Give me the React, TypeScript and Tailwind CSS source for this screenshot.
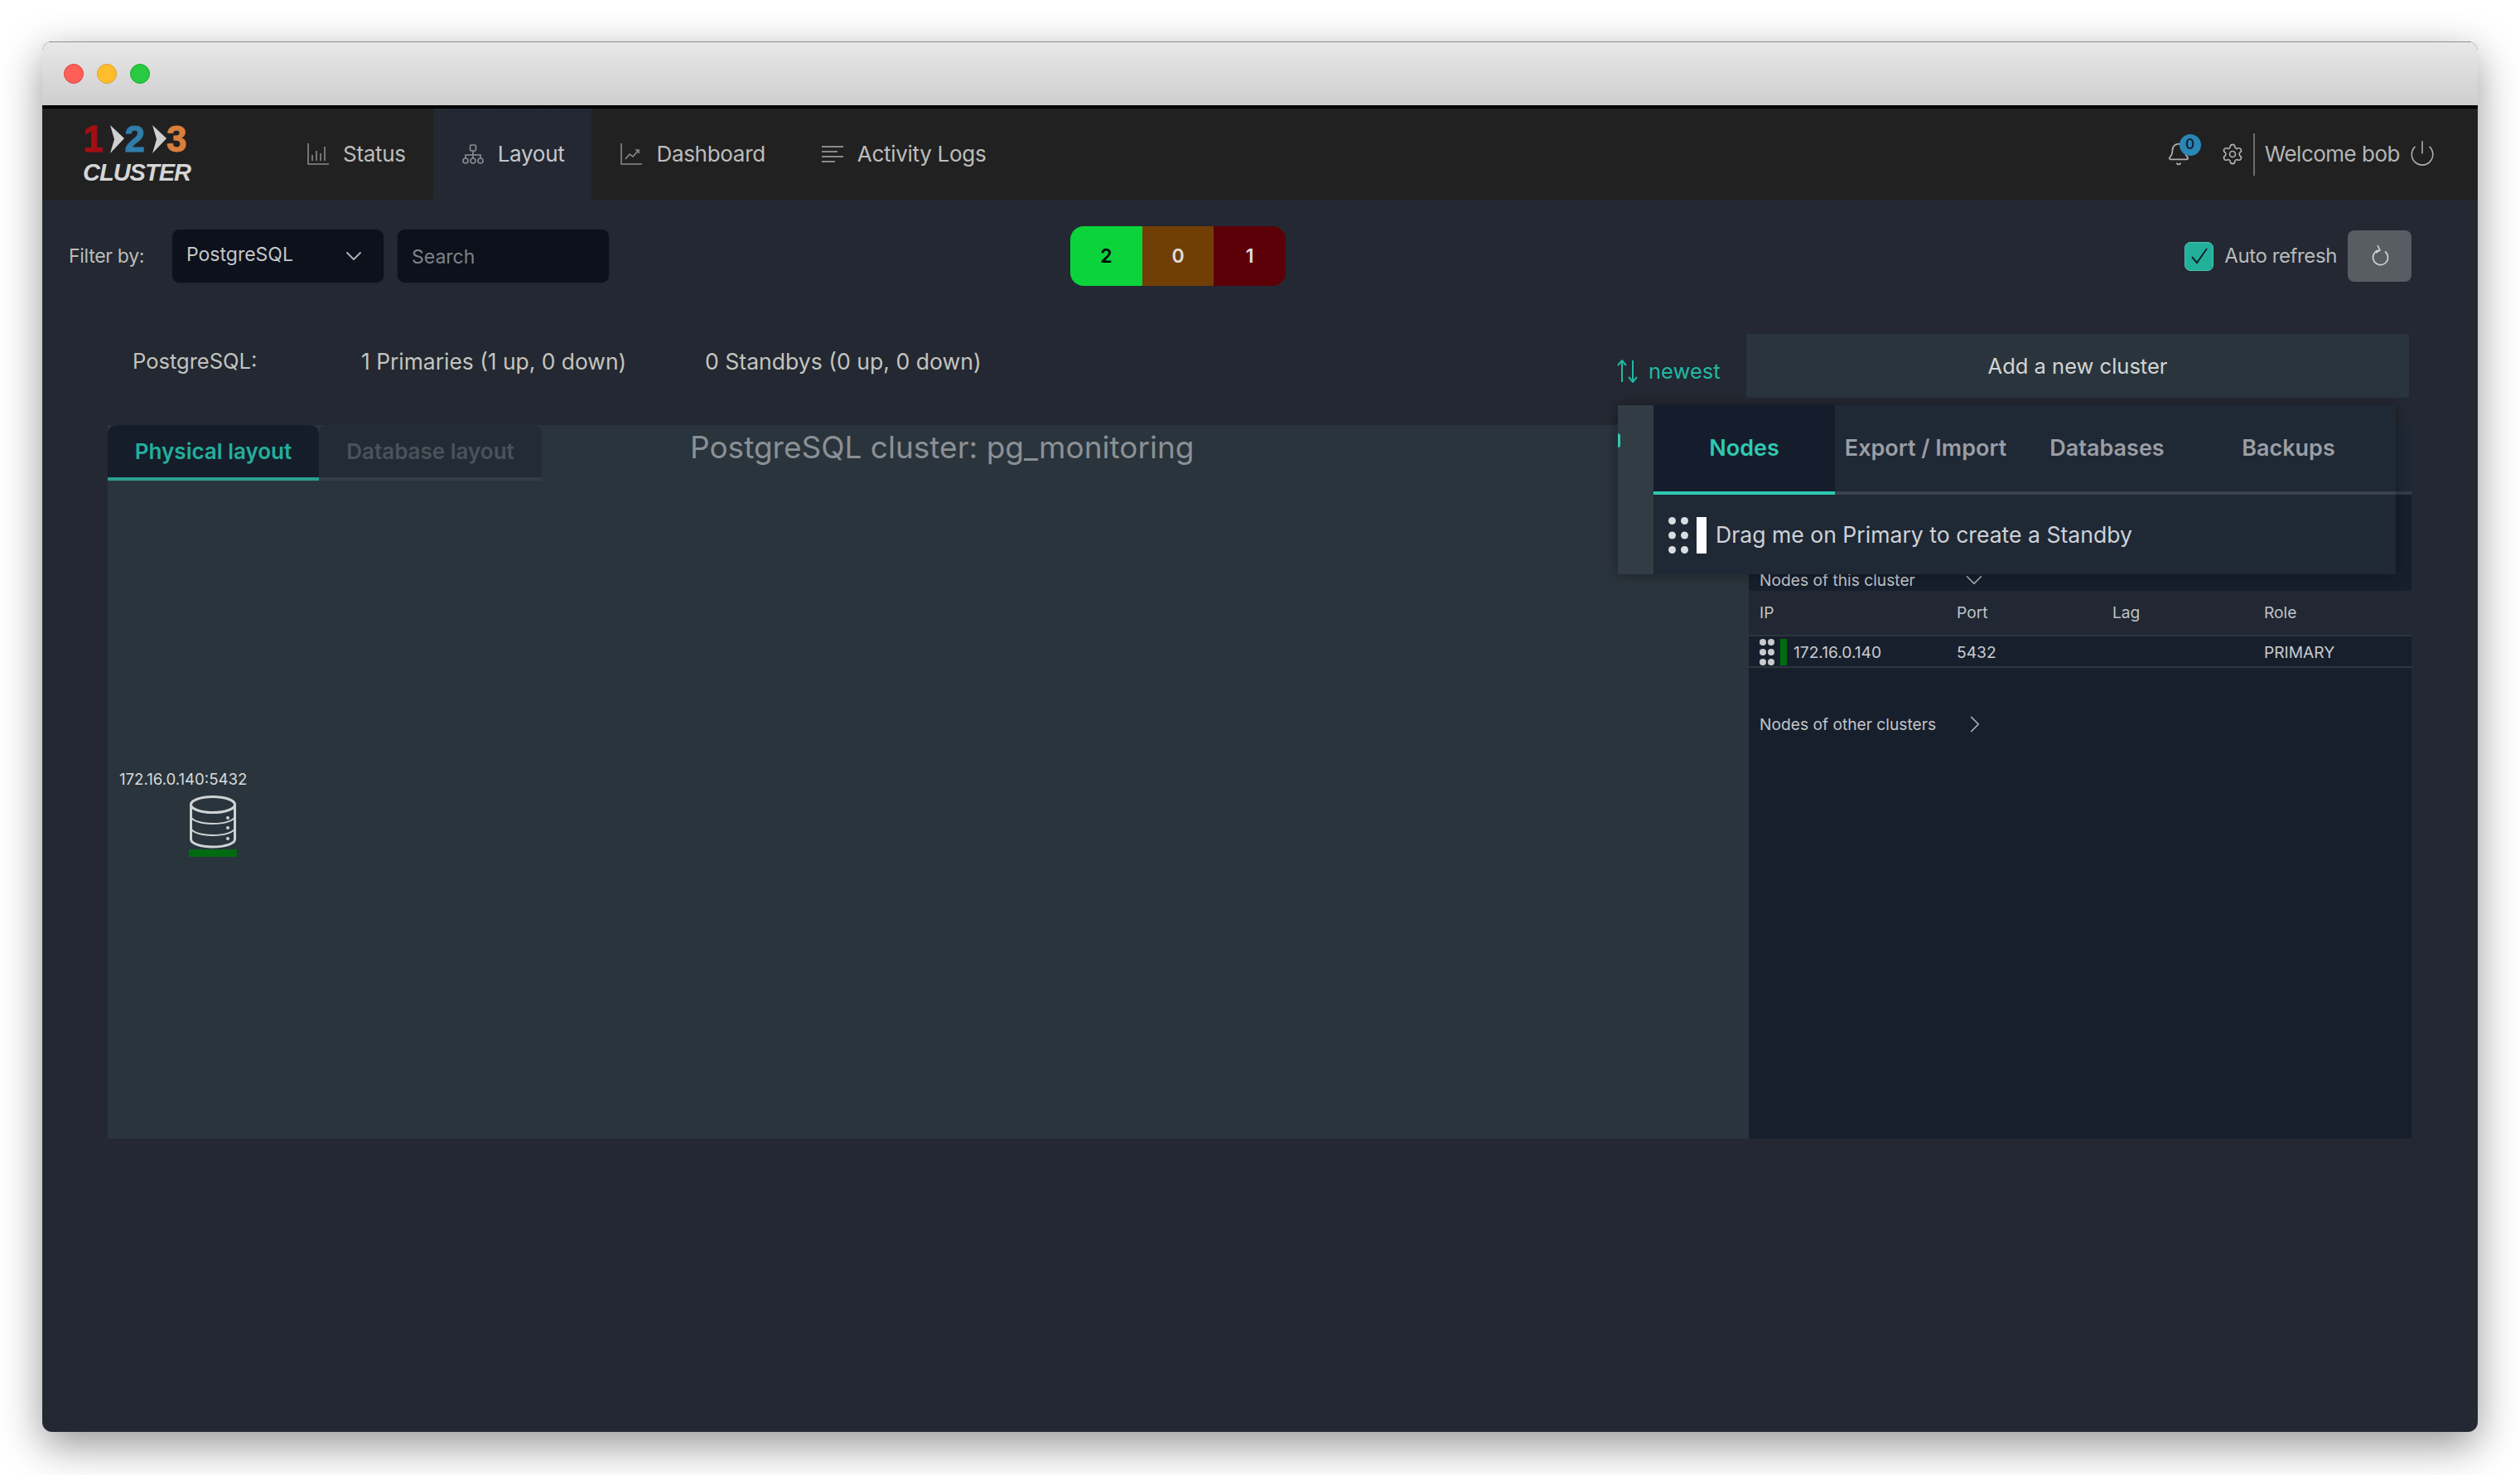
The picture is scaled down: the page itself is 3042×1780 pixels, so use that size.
import { Bell, ChevronDown, ChevronRight, Power, Settings } from "lucide-react";

const FONT = "font-['Inter','Liberation_Sans',sans-serif]";

function StatusIcon() {
  return (
    <svg width="26" height="26" viewBox="0 0 26 26" fill="none" stroke="#8a8a8a" strokeWidth="1.6">
      <path d="M1 0v25h25" />
      <path d="M6 21v-7M11 21V9M16 21v-9M21 21V4" />
    </svg>
  );
}

function LayoutIcon() {
  return (
    <svg width="26" height="24" viewBox="0 0 26 24" fill="none" stroke="#8b8e95" strokeWidth="1.6">
      <rect x="9.5" y="1" width="7" height="7" rx="1.5" />
      <path d="M13 8v5M4 17v-4h18v4M13 13v4" />
      <circle cx="4" cy="20" r="3" />
      <circle cx="13" cy="20" r="3" />
      <circle cx="22" cy="20" r="3" />
    </svg>
  );
}

function DashboardIcon() {
  return (
    <svg width="26" height="26" viewBox="0 0 26 26" fill="none" stroke="#8a8a8a" strokeWidth="1.6">
      <path d="M1 0v25h25" />
      <path d="M6 19l5-6 4 3 7-8M18 8h4v4" />
    </svg>
  );
}

function LogsIcon() {
  return (
    <svg width="26" height="22" viewBox="0 0 26 22" fill="none" stroke="#8a8a8a" strokeWidth="2">
      <path d="M0 2h26M0 8h19M0 14h26M0 20h16" />
    </svg>
  );
}

function GripDots({ w, h, r, fill }: { w: number; h: number; r: number; fill: string }) {
  const xs = [r, w - r];
  const ys = [r, h / 2, h - r];
  return (
    <svg width={w} height={h} viewBox={`0 0 ${w} ${h}`} fill={fill}>
      {ys.map((y) => xs.map((x) => <circle key={`${x}-${y}`} cx={x} cy={y} r={r} />))}
    </svg>
  );
}

function DbIcon() {
  return (
    <svg width="58" height="64" viewBox="0 0 58 64" fill="none" stroke="#d0d3d4" strokeWidth="3">
      <ellipse cx="29" cy="11" rx="26.5" ry="9.5" />
      <path d="M2.5 11v42c0 5 12 9 26.500 9s26.500-4 26.500-9V11" />
      <path d="M2.500 25c0 5 12 9 26.500 9s26.500-4 26.500-9" strokeWidth="2" />
      <path d="M2.500 39c0 5 12 9 26.500 9s26.500-4 26.500-9" strokeWidth="2" />
      <g fill="#d0d3d4" stroke="none">
        <circle cx="47" cy="27" r="2" />
        <circle cx="47" cy="39" r="2" />
        <circle cx="47" cy="52" r="2" />
      </g>
    </svg>
  );
}

function NavItem({ icon, label, active }: { icon: React.ReactNode; label: string; active?: boolean }) {
  return (
    <div className={`flex h-full items-center gap-[17px] pr-[33px] pl-[35px] ${active ? "bg-[#232832] text-[#c4c6cc]" : "text-[#bdbdbd]"}`}>
      {icon}
      <span className="-mt-[2px] text-[26px] tracking-[-0.3px]">{label}</span>
    </div>
  );
}

function Logo() {
  return (
    <div className="flex w-[285px] flex-col pl-[49px] text-[#d6d6d6]">
      <div className="flex h-[36px] items-center font-['Liberation_Sans',sans-serif] text-[44px] leading-none font-bold [-webkit-text-stroke:1px_currentColor]">
        <span className="text-[#a20f12]">1</span>
        <svg width="18" height="34" viewBox="0 0 18 34" className="ml-[8px]" fill="#cfcfcf">
          <path d="M1 0l17 16L1 34l5-17z" />
        </svg>
        <span className="text-[#2f7eab]">2</span>
        <svg width="18" height="34" viewBox="0 0 18 34" className="ml-[8px]" fill="#cfcfcf">
          <path d="M1 0l17 16L1 34l5-17z" />
        </svg>
        <span className="text-[#d9803f]">3</span>
      </div>
      <div className="mt-[8px] font-['Liberation_Sans',sans-serif] text-[29px] leading-none font-bold tracking-[-1px] italic">CLUSTER</div>
    </div>
  );
}

export default function App() {
  return (
    <div className={`h-[1780px] w-[3042px] overflow-hidden bg-white pt-[50px] pl-[51px] ${FONT}`}>
      <div className="flex h-[1678px] w-[2940px] flex-col overflow-hidden rounded-[12px] bg-[#232832] shadow-[0_16px_50px_rgba(0,0,0,0.42)]">
        {/* title bar */}
        <div className="flex h-[77px] items-center gap-[16px] border-t border-[#8f8f8f] bg-gradient-to-b from-[#e8e8e8] to-[#cecece] pl-[26px] shrink-0">
          <div className="h-[24px] w-[24px] rounded-full border border-[#e0443e] bg-[#ff5f57]" />
          <div className="h-[24px] w-[24px] rounded-full border border-[#dea123] bg-[#ffbd2e]" />
          <div className="h-[24px] w-[24px] rounded-full border border-[#1aab29] bg-[#28ca42]" />
        </div>
        <div className="h-[4px] shrink-0 bg-black" />

        {/* nav */}
        <div className="flex h-[110px] shrink-0 items-center bg-[#212121]">
          <Logo />
          <NavItem icon={<StatusIcon />} label="Status" />
          <NavItem icon={<LayoutIcon />} label="Layout" active />
          <NavItem icon={<DashboardIcon />} label="Dashboard" />
          <NavItem icon={<LogsIcon />} label="Activity Logs" />
          <div className="ml-auto flex items-center pr-[50px] text-[#b5b5b5]">
            <div className="relative mr-[36px]">
              <Bell size={30} strokeWidth={1.4} color="#b0b0b0" />
              <span className="absolute -top-[9px] -right-[12px] flex h-[26px] w-[26px] items-center justify-center rounded-full bg-[#2a86b5] text-[17px] font-semibold text-[#10263a]">
                0
              </span>
            </div>
            <Settings size={28} strokeWidth={1.4} color="#b0b0b0" />
            <div className="mr-[12px] ml-[11px] h-[51px] w-[2px] bg-[#6e6e6e]" />
            <span className="-mt-[2px] text-[26px] tracking-[-0.5px]">Welcome bob</span>
            <Power size={34} strokeWidth={1.1} color="#b0b0b0" className="-mt-[3px] ml-[10px]" />
          </div>
        </div>

        {/* filter bar */}
        <div className="mt-[35px] flex h-[66px] shrink-0 items-center pr-[80px] pl-[32px]">
          <span className="w-[124px] text-[23px] tracking-[-0.3px] text-[#bcbcb8]">Filter by:</span>
          <div className="flex h-[66px] w-[257px] items-center justify-between rounded-[10px] border border-[#1e2430] bg-[#0c111c] pr-[20px] pl-[17px]">
            <span className="-mt-[4px] text-[23px] text-[#c4c6c8]">PostgreSQL</span>
            <ChevronDown size={32} strokeWidth={1.4} color="#b0b2b5" />
          </div>
          <div className="ml-[15px] flex h-[66px] w-[257px] items-center rounded-[10px] border border-[#1e2430] bg-[#0c111c] pt-[2px] pl-[17px] text-[23px] text-[#7f8389]">
            Search
          </div>
          <div className="ml-[556px] flex h-[72px] w-[260px] overflow-hidden rounded-[16px] text-[23px] font-semibold">
            <div className="flex w-[87px] items-center justify-center bg-[#0bd43b] text-black">2</div>
            <div className="flex w-[86px] items-center justify-center bg-[#713f05] text-[#dedede]">0</div>
            <div className="flex w-[87px] items-center justify-center bg-[#5c0008] text-[#dedede]">1</div>
          </div>
          <div className="ml-auto flex items-center">
            <div className="flex h-[35px] w-[35px] items-center justify-center rounded-[7px] border border-[#4cc2b1] bg-[#22b09b]">
              <svg width="24" height="22" viewBox="0 0 24 22" fill="none" stroke="#12252b" strokeWidth="2">
                <path d="M3 12l6 7L21 2" />
              </svg>
            </div>
            <span className="ml-[13px] text-[24px] tracking-[-0.4px] text-[#b9bab8]">Auto refresh</span>
            <div className="ml-[13px] flex h-[62px] w-[77px] items-center justify-center rounded-[8px] bg-[#585c63]">
              <svg width="22" height="28" viewBox="0 0 22 28" fill="none" stroke="#d4d5d6" strokeWidth="1.6">
                <path d="M9 7a9 9 0 1 0 8 1.500" />
                <path d="M8 1l3 6-5 3" />
              </svg>
            </div>
          </div>
        </div>

        {/* summary */}
        <div className="mt-[61px] flex h-[110px] shrink-0 items-start text-[#c4c4be]">
          <span className="mt-[14px] ml-[109px] w-[276px] text-[25.5px]">PostgreSQL:</span>
          <span className="mt-[14px] w-[415px] text-[26.4px]">1 Primaries (1 up, 0 down)</span>
          <span className="mt-[14px] w-[1100px] text-[26.6px]">0 Standbys (0 up, 0 down)</span>
          <div className="mt-[26px] flex w-[157px] items-center gap-[12px] text-[#22b8a3]">
            <svg width="27" height="28" viewBox="0 0 27 28" fill="none" stroke="currentColor" strokeWidth="2">
              <path d="M7 27V2M2 7l5-6 5 6M20 1v25M15 21l5 6 5-6" />
            </svg>
            <span className="text-[25.5px]">newest</span>
          </div>
          <div className="flex h-[77px] w-[800px] items-center justify-center bg-[#2a343c] pt-[2px] text-[25.5px] text-[#d2d4d5]">
            Add a new cluster
          </div>
        </div>

        {/* content */}
        <div className="relative ml-[79px] flex h-[861px] w-[2781px] shrink-0">
          <div className="relative w-[1981px] bg-[#2a343c]">
            <div className="flex items-start">
              <div className="flex h-[67px] w-[255px] items-center justify-center rounded-t-[10px] border-b-[4px] border-[#2c9e90] bg-[#151d2b] text-[26px] font-semibold text-[#22b09b]">
                Physical layout
              </div>
              <div className="flex h-[67px] w-[269px] items-center justify-center rounded-t-[10px] border-b-[4px] border-[#333d48] bg-[#232c35] text-[26px] font-semibold text-[#4a525b]">
                Database layout
              </div>
              <span className="-mt-[1px] ml-[179px] text-[37px] text-[#8b9094]">PostgreSQL cluster: pg_monitoring</span>
            </div>
            {/* node sits on a free canvas */}
            <div className="absolute top-[415px] left-[14px] flex w-[155px] flex-col">
              <span className="whitespace-nowrap text-[18.6px] leading-[24px] text-[#d8dadb]">172.16.0.140:5432</span>
              <div className="mt-[8px] ml-[84px] flex w-[58px] flex-col">
                <DbIcon />
                <div className="mt-[1px] h-[9px] w-[58px] bg-[#006b12]" />
              </div>
            </div>
          </div>

          <div className="flex w-[800px] flex-col bg-[#171f2d]">
            <div className="h-[84px] shrink-0 border-b-[4px] border-[#333c48] bg-[#1f2835]" />
            <div className="flex h-[116px] shrink-0 items-center gap-[16px] px-[13px] pt-[90px] text-[19.2px] text-[#c2c5c8]">
              <span className="w-[226px]">Nodes of this cluster</span>
              <ChevronDown size={34} strokeWidth={1.2} color="#b0b3b6" />
            </div>
            <div className="grid h-[55px] shrink-0 grid-cols-[238px_188px_183px_1fr] items-center border-b-2 border-[#2c3440] bg-[#212833] px-[13px] text-[19.2px] text-[#bfc2c5]">
              <span>IP</span>
              <span>Port</span>
              <span>Lag</span>
              <span>Role</span>
            </div>
            <div className="grid h-[38px] shrink-0 grid-cols-[238px_188px_183px_1fr] items-center border-b-2 border-[#2c3440] px-[13px] pt-[2px] text-[19.2px] text-[#c8cbce]">
              <div className="flex items-center">
                <GripDots w={18} h={32} r={4} fill="#c8cbce" />
                <div className="ml-[7px] h-[32px] w-[8px] bg-[#006b12]" />
                <span className="ml-[8px]">172.16.0.140</span>
              </div>
              <span>5432</span>
              <span />
              <span>PRIMARY</span>
            </div>
            <div className="mt-[51px] flex items-center px-[13px] text-[19.2px] text-[#c2c5c8]">
              <span className="w-[243px]">Nodes of other clusters</span>
              <ChevronRight size={34} strokeWidth={1.2} color="#b0b3b6" />
            </div>
          </div>

          {/* drag popover over the tabs */}
          <div className="absolute -top-[24px] left-[1823px] flex h-[204px] w-[939px] bg-[#1f2835] shadow-[0_0_14px_rgba(0,0,0,0.35)]">
            <div className="relative h-full w-[43px] shrink-0 bg-[#323c44]">
              <div className="absolute top-[34px] left-0 h-[17px] w-[3px] rounded-r-full bg-[#2fcab2]" />
            </div>
            <div className="flex flex-1 flex-col">
              <div className="flex h-[108px] shrink-0 border-b-[4px] border-[#39424e] text-[27px] font-semibold text-[#9a9ea4]">
                <div className="-mb-[4px] flex w-[219px] items-center justify-center border-b-[4px] border-[#2fcab2] bg-[#151d2d] text-[#2fcab2]">
                  Nodes
                </div>
                <div className="flex w-[219px] items-center justify-center">Export / Import</div>
                <div className="flex w-[219px] items-center justify-center">Databases</div>
                <div className="flex w-[219px] items-center justify-center">Backups</div>
              </div>
              <div className="flex flex-1 items-center pt-[2px] pl-[18px]">
                <GripDots w={24} h={44} r={4.500} fill="#d9dce0" />
                <div className="ml-[10px] h-[44px] w-[12px] bg-white" />
                <span className="ml-[11px] text-[26.6px] text-[#cfd2d6]">Drag me on Primary to create a Standby</span>
              </div>
            </div>
          </div>
        </div>
      </div>
    </div>
  );
}
